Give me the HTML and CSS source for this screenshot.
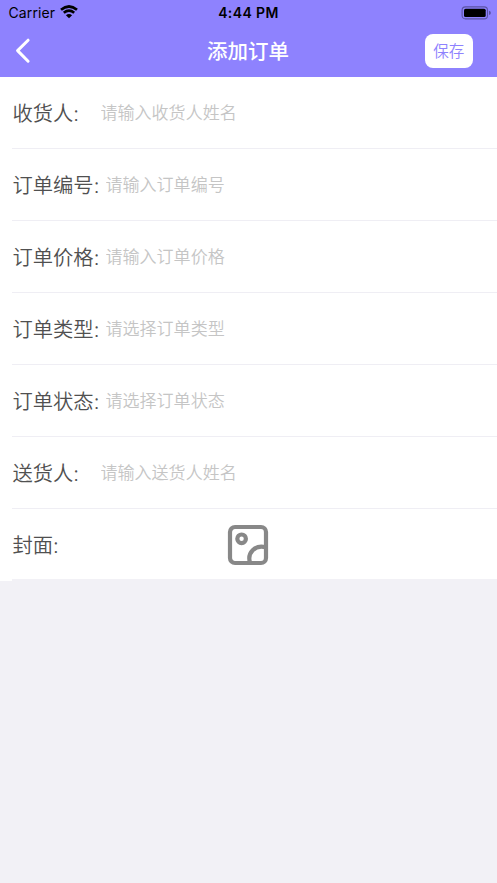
FILE: index.html
```
<!DOCTYPE html>
<html lang="zh-CN">
<head>
<meta charset="utf-8">
<title>添加订单</title>
<link rel="stylesheet" href="styles.css">
</head>
<body>
<header class="header">
  <div class="status">
    <div class="carrier"><span>Carrier</span>
      <svg class="wifi" width="18" height="14" viewBox="0 0 18 14"><path d="M9 13.3 5.9 10.2Q9 7.7 12.1 10.2Z"/><path class="arc" d="M3.8 7.7Q9 3.6 14.2 7.7M1 4.8Q9-1.8 17 4.8"/></svg>
    </div>
    <div class="time">4:44 PM</div>
    <div class="power">
      <svg width="30" height="14" viewBox="0 0 30 14"><rect class="shell" x="1.1" y=".9" width="25.4" height="12" rx="3.4"/><rect x="3" y="2.7" width="21.7" height="8.4" rx="1.6"/><path class="tip" d="M28 4.8q1.9.6 1.9 2.1T28 9Z"/></svg>
    </div>
  </div>
  <nav class="nav">
    <svg class="back" width="18" height="26" viewBox="0 0 18 26"><path d="M14.1 2.2 3.6 12.6 14.1 23.2"/></svg>
    <h1 class="title">添加订单</h1>
    <button class="save">保存</button>
  </nav>
</header>
<main class="form">
  <label class="row"><span class="label short">收货人:</span><input class="input" placeholder="请输入收货人姓名"></label>
  <label class="row"><span class="label">订单编号:</span><input class="input" placeholder="请输入订单编号"></label>
  <label class="row"><span class="label">订单价格:</span><input class="input" placeholder="请输入订单价格"></label>
  <label class="row"><span class="label">订单类型:</span><input class="input" placeholder="请选择订单类型"></label>
  <label class="row"><span class="label">订单状态:</span><input class="input" placeholder="请选择订单状态"></label>
  <label class="row"><span class="label short">送货人:</span><input class="input" placeholder="请输入送货人姓名"></label>
  <div class="row cover"><span class="label">封面:</span>
    <svg class="picture" width="42" height="42" viewBox="0 0 42 42"><rect x="3" y="3" width="36" height="36" rx="5"/><circle cx="14.6" cy="14.8" r="4.3"/><path d="M23 38.5C20 29 28 20.5 38.5 23.2"/></svg>
  </div>
</main>
</body>
</html>
```
FILE: styles.css
```
* { box-sizing: border-box; }
body {
  margin: 0;
  min-height: 100vh;
  background: #f2f1f6;
  font-family: Inter, "Noto Sans CJK SC", sans-serif;
}
.header { height: 77px; background: #8e82fe; }
.status {
  display: grid;
  grid-template-columns: 1fr auto 1fr;
  height: 25px;
  padding: 0 6.5px 0 8.5px;
  align-items: center;
  color: #000;
  font-size: 14px;
}
.carrier { display: flex; align-items: center; gap: 5px; letter-spacing: .1px; }
.wifi { margin-bottom: 1px; }
.wifi .arc { fill: none; stroke: #000; stroke-width: 2.7; }
.time { margin-right: 2px; font-weight: 600; letter-spacing: .4px; }
.power { display: flex; justify-content: flex-end; }
.shell { fill: none; stroke: #5b53a4; stroke-width: 1.1; }
.tip { fill: #5b53a4; }
.nav {
  display: grid;
  grid-template-columns: 1fr auto 1fr;
  align-items: center;
  height: 52px;
  padding: 0 24px 0 14px;
}
.back { fill: none; stroke: #fff; stroke-width: 3; stroke-linecap: round; stroke-linejoin: round; }
.title {
  margin: 0 0 2px 9px;
  color: #fff;
  font: 500 20.5px/30px "Noto Sans CJK SC", sans-serif;
}
.save {
  justify-self: end;
  width: 48.5px;
  height: 34px;
  padding: 0 0 2px;
  border: 0;
  border-radius: 8px;
  background: #fff;
  color: #8e82fe;
  font: 350 15.5px/32px "Noto Sans CJK SC", sans-serif;
}
.form { background: #fff; }
.row {
  display: flex;
  align-items: center;
  height: 72px;
  margin-left: 12px;
  border-bottom: 1px solid #efeef4;
}
.cover { border-bottom: 2px solid #f2f1f6; }
.label {
  flex: none;
  width: 93.5px;
  padding: 3px 0 0 .5px;
  color: #505050;
  font-size: 20.3px;
  font-weight: 350;
  line-height: 30px;
  white-space: nowrap;
}
.short { width: 88.5px; }
.input {
  flex: 1;
  min-width: 0;
  height: 40px;
  padding: 0 0 2px;
  border: 0;
  outline: 0;
  background: transparent;
  font: 350 17.05px/26px "Noto Sans CJK SC", sans-serif;
}
.input::placeholder { color: #c5c5c5; opacity: 1; }
.picture { margin: 1px 0 0 121.5px; fill: none; stroke: #888; stroke-width: 4.2; }
```
